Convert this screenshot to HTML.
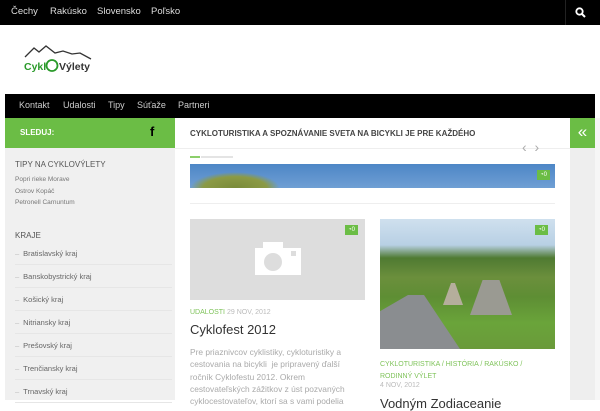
<!DOCTYPE html>
<html><head><meta charset="utf-8"><style>
*{margin:0;padding:0;box-sizing:border-box}
body{width:600px;height:400px;overflow:hidden;background:#fff;font-family:"Liberation Sans",sans-serif;position:relative}
.a{position:absolute}
.top{left:0;top:0;width:600px;height:25px;background:#000}
.top span{position:absolute;top:6px;color:#ddd;font-size:9.5px}
.nav{left:5px;top:94px;width:590px;height:24px;background:#000}
.nav span{position:absolute;top:6px;color:#ccc;font-size:9px}
.side{left:5px;top:148px;width:170px;height:252px;background:#f0f0f0}
.sg{left:5px;top:118px;width:170px;height:30px;background:#6bbd45}
.rg{left:570px;top:118px;width:25px;height:30px;background:#6bbd45;color:#fff;font-size:17px;text-align:center;line-height:28px}
.rs{left:570px;top:148px;width:25px;height:252px;background:#eee}
.rs2{left:595px;top:118px;width:5px;height:282px;background:#f6f6f6}
.kr{position:absolute;left:10px;width:157px;font-size:7.5px;color:#666;border-bottom:1px solid #e6e6e6;height:23px;padding-top:7px}
.kr b{color:#bbb;font-weight:normal;margin-right:4px}
.bub{position:absolute;background:#6bbd45;color:#fff;font-size:6px;padding:1px 3px;height:10px;line-height:9px}
.g{color:#7fc35a}
</style></head><body>
<div class="a top">
<span style="left:11px">Čechy</span><span style="left:50px">Rakúsko</span><span style="left:97px">Slovensko</span><span style="left:151px">Poľsko</span>
<div class="a" style="left:565px;top:0;width:1px;height:25px;background:#222"></div>
<svg class="a" style="left:575px;top:7px" width="11" height="11" viewBox="0 0 11 11"><circle cx="4.5" cy="4.5" r="3.2" stroke="#fff" stroke-width="1.8" fill="none"/><path d="M7 7 L10 10" stroke="#fff" stroke-width="2"/></svg>
</div>
<svg class="a" style="left:22px;top:45px" width="72" height="28" viewBox="0 0 72 28"><path d="M3 12 L12 3 L17 7 L24 1 L33 8 L41 6 L50 9 L58 8 L69 14" stroke="#333" stroke-width="1.3" fill="none"/>
<text x="2" y="25" font-size="10.5" fill="#2a9a2a" font-family="Liberation Sans" font-weight="bold">Cykl</text>
<circle cx="30" cy="20.5" r="5.5" stroke="#2a9a2a" stroke-width="1.8" fill="none"/>
<text x="37" y="25" font-size="10.5" fill="#333" font-family="Liberation Sans" font-weight="bold">Výlety</text></svg>
<div class="a nav"><span style="left:14px">Kontakt</span><span style="left:58px">Udalosti</span><span style="left:103px">Tipy</span><span style="left:132px">Súťaže</span><span style="left:173px">Partneri</span></div>
<div class="a sg"><span class="a" style="left:15px;top:10px;color:#fff;font-size:8px;font-weight:bold">SLEDUJ:</span><span class="a" style="left:145px;top:6px;color:#000;font-size:13px;font-weight:bold">f</span></div>
<div class="a side">
<div class="a" style="left:10px;top:12px;font-size:8px;color:#555">TIPY NA CYKLOVÝLETY</div>
<div class="a" style="left:10px;top:28px;font-size:6.5px;color:#777">Popri rieke Morave</div>
<div class="a" style="left:10px;top:40px;font-size:6.5px;color:#777">Ostrov Kopáč</div>
<div class="a" style="left:10px;top:51px;font-size:6.5px;color:#777">Petronell Carnuntum</div>
<div class="a" style="left:10px;top:83px;font-size:8px;color:#555">KRAJE</div>
<div class="kr" style="top:94px"><b>–</b>Bratislavský kraj</div>
<div class="kr" style="top:117px"><b>–</b>Banskobystrický kraj</div>
<div class="kr" style="top:140px"><b>–</b>Košický kraj</div>
<div class="kr" style="top:163px"><b>–</b>Nitriansky kraj</div>
<div class="kr" style="top:186px"><b>–</b>Prešovský kraj</div>
<div class="kr" style="top:209px"><b>–</b>Trenčiansky kraj</div>
<div class="kr" style="top:232px"><b>–</b>Trnavský kraj</div>
</div>
<div class="a rg">«</div><div class="a rs"></div><div class="a rs2"></div>
<div class="a" style="left:190px;top:129px;font-size:8px;font-weight:bold;color:#444">CYKLOTURISTIKA A SPOZNÁVANIE SVETA NA BICYKLI JE PRE KAŽDÉHO</div>
<div class="a" style="left:175px;top:148px;width:395px;height:1px;background:#eee"></div>
<div class="a" style="left:522px;top:139px;color:#aaa;font-size:14px">‹ &nbsp;›</div>
<div class="a" style="left:190px;top:156px;width:10px;height:2px;background:#8ccf6b"></div>
<div class="a" style="left:201px;top:156px;width:32px;height:2px;background:#e4e4e4"></div>
<div class="a" style="left:190px;top:164px;width:365px;height:24px;background:linear-gradient(#4d86c6,#6f9fd4)"></div>
<div class="a" style="left:190px;top:172px;width:90px;height:16px;background:radial-gradient(ellipse at 50% 100%,#7a8b3a 0,#8b9a45 50%,transparent 70%)"></div>
<div class="bub" style="left:537px;top:170px">◔0</div>
<div class="a" style="left:190px;top:203px;width:365px;height:1px;background:#eee"></div>
<div class="a" style="left:190px;top:219px;width:175px;height:81px;background:#ddd"></div>
<svg class="a" style="left:255px;top:242px" width="46" height="33" viewBox="0 0 46 33"><rect x="0" y="6" width="46" height="27" fill="#fff"/><rect x="8" y="0" width="20" height="8" fill="#fff"/><circle cx="18" cy="20" r="9" fill="#ddd"/><rect x="36" y="9" width="5" height="5" fill="#ddd"/></svg>
<div class="bub" style="left:345px;top:225px">◔0</div>
<div class="a" style="left:380px;top:219px;width:175px;height:130px;background:linear-gradient(#cfe0ee 0,#b8d0e4 20%,#4f7a32 30%,#6b8f3c 45%,#5e8e34 60%,#6aa43a 80%,#6a9a3a 100%)"></div>
<div class="a" style="left:380px;top:295px;width:80px;height:54px;background:#8a8d90;clip-path:polygon(35% 0,55% 0,100% 100%,0 100%,0 30%)"></div>
<div class="a" style="left:470px;top:280px;width:42px;height:35px;background:#9a9a92;clip-path:polygon(30% 0,70% 0,100% 100%,0 100%)"></div>
<div class="a" style="left:443px;top:283px;width:20px;height:22px;background:#b5ae9c;clip-path:polygon(40% 0,60% 0,100% 100%,0 100%)"></div>
<div class="bub" style="left:535px;top:225px">◔0</div>
<div class="a" style="left:190px;top:309px;font-size:7px"><span class="g">UDALOSTI</span> <span style="color:#bbb">29 NOV, 2012</span></div>
<div class="a" style="left:190px;top:322px;font-size:13px;color:#333">Cyklofest 2012</div>
<div class="a" style="left:190px;top:346px;width:172px;font-size:8.4px;line-height:12.3px;color:#aaa">Pre priaznivcov cyklistiky, cykloturistiky a cestovania na bicykli &nbsp;je pripravený ďalší ročník Cyklofestu 2012. Okrem cestovateľských zážitkov z úst pozvaných cyklocestovateľov, ktorí sa s vami podelia</div>
<div class="a" style="left:380px;top:359px;width:150px;font-size:7px;line-height:11.5px;color:#7fc35a">CYKLOTURISTIKA / HISTÓRIA / RAKÚSKO / RODINNÝ VÝLET</div>
<div class="a" style="left:380px;top:382px;font-size:7px;color:#bbb">4 NOV, 2012</div>
<div class="a" style="left:380px;top:396px;font-size:13px;color:#333">Vodným Zodiaceanie</div>
</body></html>
